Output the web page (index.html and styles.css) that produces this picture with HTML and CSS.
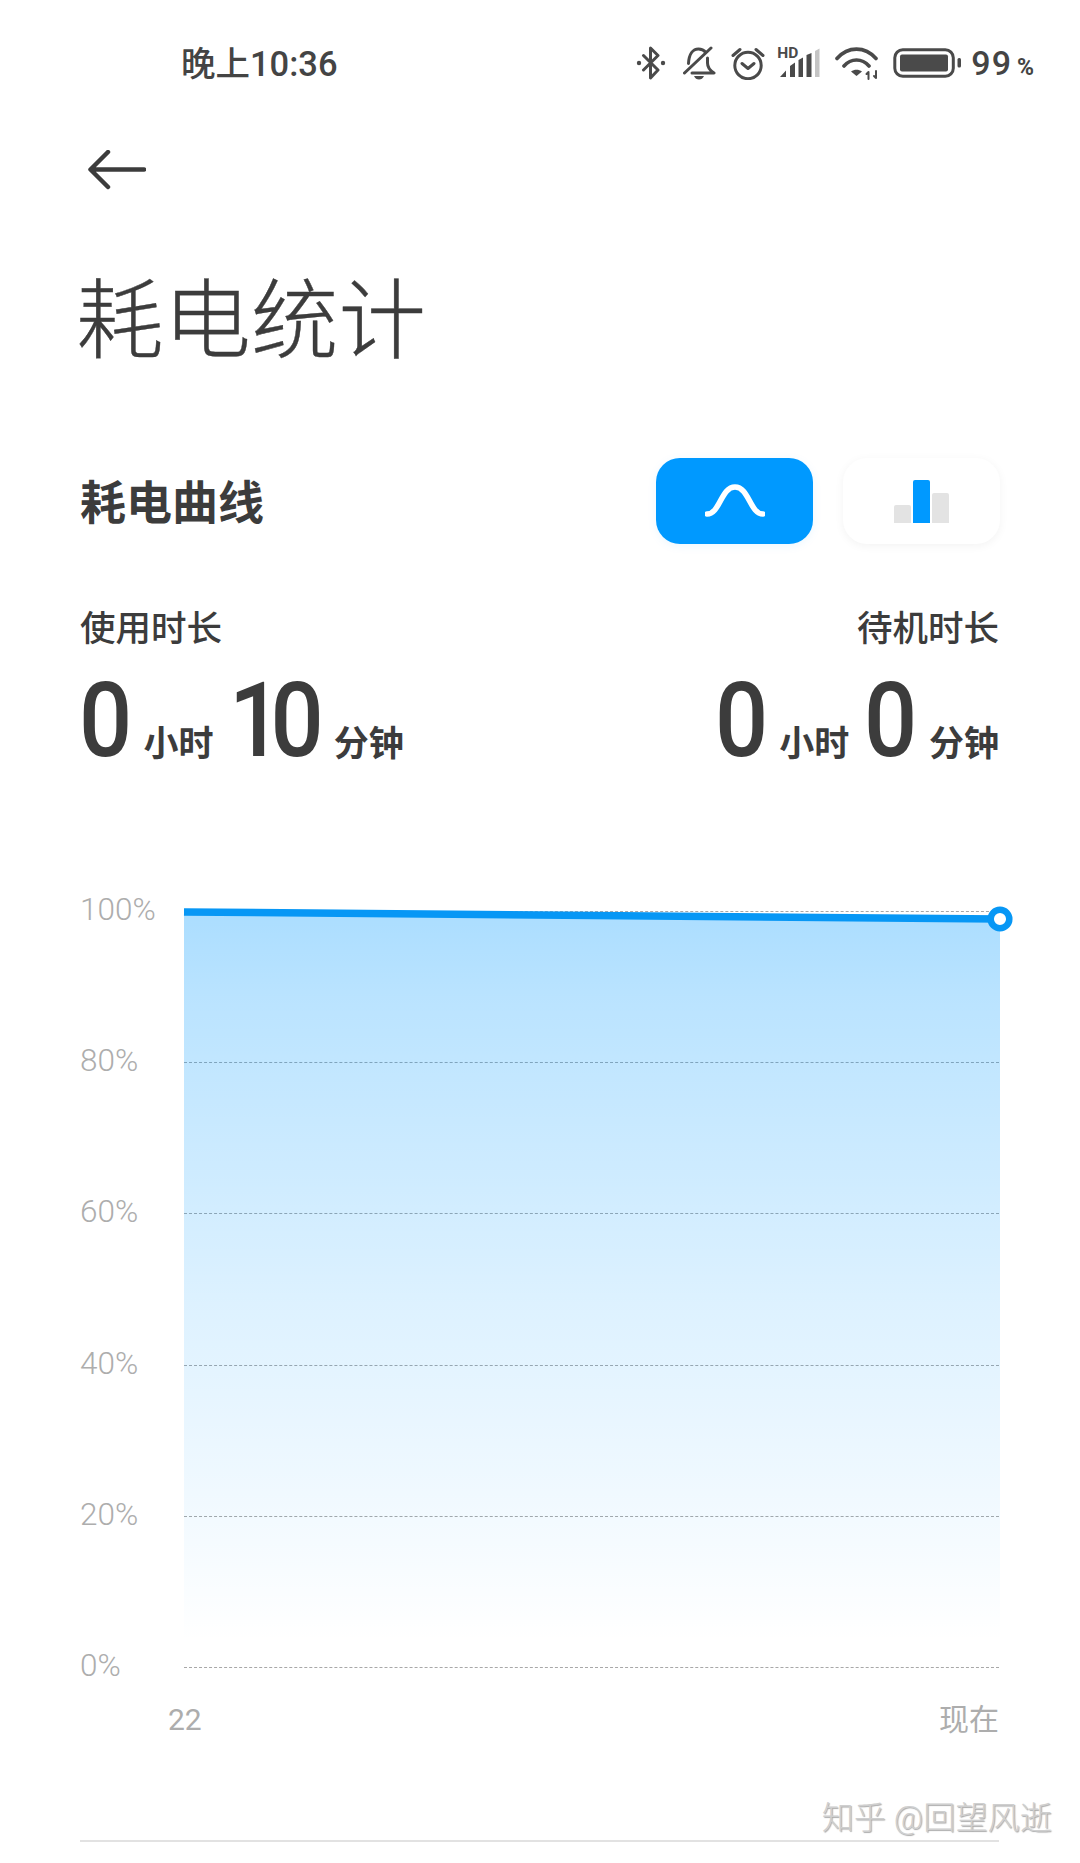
FILE: index.html
```html
<!DOCTYPE html>
<html lang="zh-CN">
<head>
    <meta charset="UTF-8">
    <meta name="viewport" content="width=device-width, initial-scale=1.0">
    <title>耗电统计</title>
    <link rel="stylesheet" href="styles.css">
</head>
<body>
    <div class="status-bar">
        <span class="status-time">晚上10:36</span>
        <div class="status-icons">
            <svg class="icon-bt" viewBox="0 0 34 34"><path d="M7.500 9.500 22 24l-7.500 8V2L22 9.500 7.500 24"/><circle class="dot" cx="3" cy="17" r="2.200"/><circle class="dot" cx="27" cy="17" r="2.200"/></svg>
            <svg class="icon-bell" viewBox="0 0 35 34"><path d="M28 2 1.500 27M5.500 17.500C6 8 10 3 15.500 3c3 0 5.500 1.200 7.500 3.500M24.500 12v5c0 4 2.500 7.500 6.500 10H9"/><path class="dot" d="M11 30h10c-1 2.500-2.800 3.500-5 3.500s-4-1-5-3.500z"/></svg>
            <svg class="icon-alarm" viewBox="0 0 34 34"><circle cx="17" cy="19.500" r="13.200"/><path d="M11 17.500 17 22.500 23 17.500M2 9.500 9 3.500M32 9.500 25 3.500"/></svg>
            <div class="signal">
                <span class="signal__hd">HD</span>
                <svg class="icon-signal" viewBox="0 0 44 30">
                    <path class="dot" d="M2 29l6-6.500V29zM12 29v-11l5-3.500V29zM20.500 29V12l4.500-2.500V29zM28.500 29V7l5-2v24z"/>
                    <path class="bar-off" d="M37 3l4.500-2.500V29H37z"/>
                </svg>
            </div>
            <svg class="icon-wifi" viewBox="0 0 45 34"><path d="M2 12.500C13 0 30 0 41 12.500M9 20C16 12 27 12 34 20"/><path class="dot" d="M16 25.500c3.500-2.500 7.500-2.500 11 0l-5.500 4.500z"/><path class="thin" d="M33.500 26v7M31.500 28l2-2M41 25v7M39 30l2 2"/></svg>
            <svg class="icon-battery" viewBox="0 0 68 30"><rect x="1.800" y="1.800" width="58.500" height="26.400" rx="8"/><rect class="dot" x="7" y="6.500" width="48" height="17" rx="2"/><rect class="dot" x="64.500" y="10" width="3.500" height="9.500" rx="1.500"/></svg>
            <span class="status-level">99<small>%</small></span>
        </div>
    </div>

    <div class="page">
        <svg class="back" viewBox="0 0 58 40"><path d="M56 19.500H3M20 2 2.500 19.500 20 37"/></svg>
        <h1 class="title">耗电统计</h1>

        <div class="section-head">
            <h2>耗电曲线</h2>
            <div class="toggle">
                <button class="toggle__btn toggle__btn--on">
                    <svg viewBox="0 0 60 40"><path d="M2 33C15 33 16 6 30 6s15 27 28 27"/></svg>
                </button>
                <button class="toggle__btn">
                    <span class="mini-bars">
                        <i class="mini-bars__low"></i>
                        <i class="mini-bars__high"></i>
                        <i class="mini-bars__mid"></i>
                    </span>
                </button>
            </div>
        </div>

        <div class="stats">
            <div class="stat">
                <div class="stat__label">使用时长</div>
                <div class="stat__value"><b>0</b><span>小时</span><b class="pair">10</b><span>分钟</span></div>
            </div>
            <div class="stat stat--right">
                <div class="stat__label">待机时长</div>
                <div class="stat__value"><b>0</b><span>小时</span><b>0</b><span>分钟</span></div>
            </div>
        </div>

        <div class="chart">
            <div class="tick"><span>100%</span><i></i></div>
            <div class="tick"><span>80%</span><i></i></div>
            <div class="tick"><span>60%</span><i></i></div>
            <div class="tick"><span>40%</span><i></i></div>
            <div class="tick"><span>20%</span><i></i></div>
            <div class="tick"><span>0%</span><i></i></div>
            <svg class="curve" viewBox="0 0 816 756">
                <defs>
                    <linearGradient id="fade" x1="0" y1="0" x2="0" y2="1">
                        <stop offset="0" stop-color="#0099ff" stop-opacity="0.33"/>
                        <stop offset="0.12" stop-color="#0099ff" stop-opacity="0.27"/>
                        <stop offset="0.55" stop-color="#0099ff" stop-opacity="0.13"/>
                        <stop offset="1" stop-color="#0099ff" stop-opacity="0"/>
                    </linearGradient>
                </defs>
                <path class="curve__area" d="M0 0 816 7V730H0z"/>
                <path class="curve__line" d="M0 0 816 7"/>
                <circle class="curve__dot" cx="816" cy="7" r="9.300"/>
            </svg>
        </div>

        <div class="axis">
            <span>22</span>
            <span>现在</span>
        </div>

        <div class="rule"></div>
    </div>

    <div class="watermark">知乎 @回望风逝</div>
</body>
</html>
```
FILE: styles.css
```css
* {
    box-sizing: border-box;
}

html, body {
    margin: 0;
    padding: 0;
}

body {
    position: relative;
    width: 1080px;
    height: 1863px;
    overflow: hidden;
    background: #fff;
    color: #3c3c3c;
    font-family: Roboto, "Noto Sans CJK SC", sans-serif;
}

/* status bar */
.status-bar {
    display: flex;
    justify-content: space-between;
    align-items: center;
    height: 126px;
    padding: 0 45px 0 181px;
    color: #444;
}

.status-time {
    margin-top: -5px;
    font-size: 34.500px;
    font-weight: 500;
}

.status-icons {
    display: flex;
    align-items: center;
    gap: 13px;
}

.status-icons svg {
    height: 34px;
    fill: none;
    stroke: #4a4a4a;
    stroke-width: 3;
    stroke-linecap: round;
    stroke-linejoin: round;
}

.status-icons .dot {
    fill: #4a4a4a;
    stroke: none;
}

.status-icons .thin {
    stroke-width: 2;
}

.icon-bt { width: 34px; }
.icon-bell { width: 35px; }
.icon-alarm { width: 34px; }
.icon-wifi { width: 45px; }

.status-icons .icon-wifi path {
    stroke-width: 3.600;
}

.status-icons .icon-wifi .thin {
    stroke-width: 2;
}

.signal {
    position: relative;
    width: 44px;
    height: 30px;
}

.signal__hd {
    position: absolute;
    top: -2px;
    left: -1px;
    color: #4a4a4a;
    font-size: 15.500px;
    font-weight: 700;
    line-height: 14px;
}

.status-icons .icon-signal {
    display: block;
    width: 44px;
    height: 30px;
}

.status-icons .icon-signal .bar-off {
    fill: #c4c4c4;
    stroke: none;
}

.status-icons .icon-battery {
    width: 68px;
    height: 30px;
    margin-right: -3px;
}

.status-level {
    font-size: 34px;
    font-weight: 500;
    letter-spacing: 1px;
}

.status-level small {
    margin-left: 5px;
    font-size: 23px;
    font-weight: 700;
}

/* page content */
.page {
    padding: 0 81px 0 80px;
}

.back {
    display: block;
    width: 58px;
    height: 40px;
    margin: 24px 0 0 8px;
    fill: none;
    stroke: #3c3c3c;
    stroke-width: 4.500;
    stroke-linecap: round;
    stroke-linejoin: round;
}

.title {
    margin: 77px 0 0 -4px;
    font-size: 87.500px;
    font-weight: 300;
    line-height: 110px;
    -webkit-text-stroke: 0.4px #3c3c3c;
}

.section-head {
    display: flex;
    justify-content: space-between;
    align-items: center;
    margin-top: 81px;
}

.section-head h2 {
    margin: 4px 0 0;
    font-size: 46px;
    font-weight: 700;
    line-height: 60px;
}

.toggle {
    display: flex;
    gap: 30px;
    margin-right: -1px;
}

.toggle__btn {
    display: flex;
    justify-content: center;
    align-items: center;
    width: 157px;
    height: 86px;
    padding: 0;
    border: 0;
    border-radius: 24px;
    background: #fff;
    box-shadow: 0 2px 10px rgba(0, 0, 0, 0.05);
}

.toggle__btn--on {
    background: #0099ff;
    box-shadow: 0 2px 10px rgba(0, 153, 255, 0.08);
}

.toggle__btn svg {
    width: 60px;
    height: 40px;
    fill: none;
    stroke: #fff;
    stroke-width: 5.500;
    stroke-linecap: round;
}

.mini-bars {
    display: flex;
    align-items: flex-end;
    gap: 2.500px;
    height: 43px;
}

.mini-bars i {
    display: block;
    width: 16.500px;
    background: #e3e3e3;
    border-radius: 2px 2px 0 0;
}

.mini-bars__low { height: 18px; }
.mini-bars__mid { height: 30px; }

.mini-bars .mini-bars__high {
    height: 43px;
    background: #0099ff;
}

.stats {
    display: flex;
    justify-content: space-between;
    margin-top: 60px;
}

.stat--right {
    text-align: right;
}

.stat__label {
    font-size: 35.500px;
    font-weight: 500;
    line-height: 50px;
}

.stat__value {
    margin-top: 12px;
    line-height: 110px;
    white-space: nowrap;
}

/* Roboto digits squeezed to the narrower numerals of the system font */
.stat__value b {
    display: inline-block;
    margin: 0 -8.500px 0 -1px;
    font-size: 104px;
    font-weight: 500;
    transform: scaleX(0.9);
    transform-origin: left;
}

.stat__value b.pair {
    margin-right: -1px;
    letter-spacing: -13px;
}

.stat__value span {
    margin: 0 16px 0 14px;
    font-size: 35px;
    font-weight: 700;
}

.stat__value span:last-child {
    margin-right: 0;
}

/* chart */
.chart {
    position: relative;
    margin-top: 30px;
}

.tick {
    display: flex;
    align-items: center;
    height: 151.200px;
}

.tick span {
    width: 104px;
    margin-top: -4px;
    color: #adadad;
    font-size: 31.500px;
    font-weight: 300;
}

.tick i {
    flex: 1;
    border-top: 1px dashed #a8a8a8;
}

.curve {
    position: absolute;
    top: 75.600px;
    left: 104px;
    width: 816px;
    height: 756px;
    overflow: visible;
}

.curve__area {
    fill: url(#fade);
}

.curve__line {
    fill: none;
    stroke: #0797f5;
    stroke-width: 7.500;
}

.curve__dot {
    fill: #fff;
    stroke: #0797f5;
    stroke-width: 6.500;
}

.axis {
    display: flex;
    justify-content: space-between;
    margin-top: -43px;
    padding-left: 88px;
    color: #adadad;
    font-size: 30px;
    line-height: 40px;
}

.rule {
    height: 2px;
    margin-top: 100px;
    background: #e2e2e2;
}

/* embossed credit in the corner */
.watermark {
    position: absolute;
    top: 1796px;
    right: 28px;
    color: #cfcfcf;
    font-size: 32.200px;
    font-weight: 300;
    line-height: 44px;
    text-shadow: 1px 1px 1px #aaa;
}
```
